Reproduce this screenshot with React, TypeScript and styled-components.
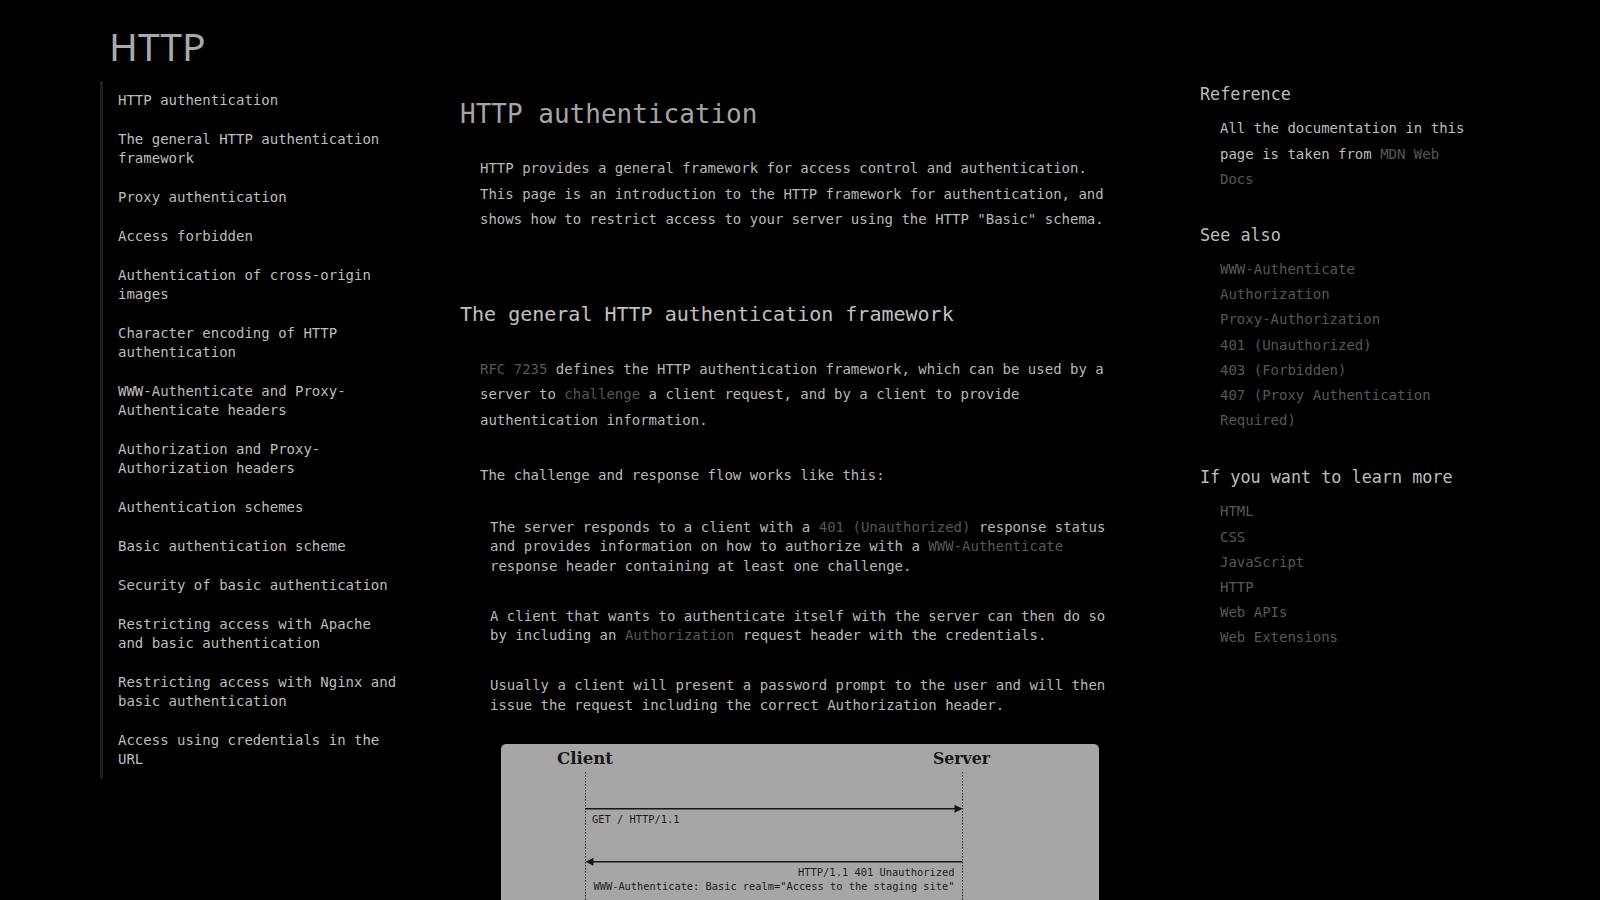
import React from "react";
import styled, { createGlobalStyle } from "styled-components";

const GlobalStyle = createGlobalStyle`
  html, body {
    background: #000;
  }
  body {
    margin: 0;
    font-family: "DejaVu Sans Mono", monospace;
    font-size: 14px;
    color: #b8b8b8;
  }
  ::-webkit-scrollbar {
    width: 5px;
    background: #000;
  }
  ::-webkit-scrollbar-thumb {
    background: #2f2f2f;
    border-radius: 2px;
  }
`;

const Page = styled.div`
  padding: 0 0 120px 100px;
`;

const Header = styled.header`
  height: 81px;
  padding-top: 26px;
  box-sizing: border-box;
`;

const SiteTitle = styled.h1`
  margin: 0 0 0 9px;
  font-family: "Noto Sans", sans-serif;
  font-size: 39px;
  line-height: 40px;
  font-weight: 400;
  color: #a9a9a9;
`;

const Layout = styled.div`
  display: flex;
  align-items: flex-start;
`;

const Sidebar = styled.nav`
  flex: none;
  width: 300px;
  box-sizing: border-box;
  border-left: 3px solid #1e1e1e;
`;

const NavList = styled.ul`
  list-style: none;
  margin: 0;
  padding: 0;
`;

const NavLink = styled.a`
  display: block;
  padding: 10px 0 10px 15px;
  line-height: 19px;
  color: #bdbdbd;
  text-decoration: none;
`;

const Main = styled.main`
  flex: none;
  width: 650px;
  margin-left: 60px;
`;

const PageTitle = styled.h1`
  margin: 18px 0 0;
  font-size: 26px;
  line-height: 31px;
  font-weight: 400;
  color: #a6a6a6;
`;

const SectionTitle = styled.h2`
  margin: 69px 0 0;
  font-size: 20px;
  line-height: 24px;
  font-weight: 400;
  color: #c0c0c0;
`;

const Para = styled.p<{ $gap?: number }>`
  margin: ${(p) => p.$gap ?? 30}px 0 0;
  padding-left: 20px;
  line-height: 25.5px;
`;

const Link = styled.a`
  color: #575757;
  text-decoration: none;
`;

const FlowList = styled.ul`
  list-style: none;
  margin: 29px 0 0;
  padding: 0;
`;

const FlowItem = styled.li`
  padding-left: 30px;
  line-height: 19.5px;
  & + & {
    margin-top: 30.5px;
  }
`;

const Figure = styled.figure`
  margin: 29px 0 0 41px;
  width: 598px;
  border-radius: 5px;
  overflow: hidden;
  background: #a6a6a6;
  line-height: 0;
`;

const Aside = styled.aside`
  flex: none;
  width: 270px;
  margin-left: 90px;
`;

const AsideTitle = styled.h3<{ $gap: number }>`
  margin: ${(p) => p.$gap}px 0 0;
  font-size: 16.8px;
  line-height: 20px;
  font-weight: 400;
  color: #bdbdbd;
`;

const AsideText = styled.p`
  margin: 12px 0 0;
  padding-left: 20px;
  line-height: 25.5px;
  color: #bdbdbd;
`;

const AsideList = styled.ul`
  list-style: none;
  margin: 12.5px 0 0;
  padding: 0 0 0 20px;
  width: 250px;
  line-height: 25.2px;
`;

const AsideLink = styled.a`
  color: #575757;
  text-decoration: none;
`;

const navItems = [
  "HTTP authentication",
  "The general HTTP authentication framework",
  "Proxy authentication",
  "Access forbidden",
  "Authentication of cross-origin images",
  "Character encoding of HTTP authentication",
  "WWW-Authenticate and Proxy-Authenticate headers",
  "Authorization and Proxy-Authorization headers",
  "Authentication schemes",
  "Basic authentication scheme",
  "Security of basic authentication",
  "Restricting access with Apache and basic authentication",
  "Restricting access with Nginx and basic authentication",
  "Access using credentials in the URL",
];

const seeAlso = [
  "WWW-Authenticate",
  "Authorization",
  "Proxy-Authorization",
  "401 (Unauthorized)",
  "403 (Forbidden)",
  "407 (Proxy Authentication Required)",
];

const learnMore = ["HTML", "CSS", "JavaScript", "HTTP", "Web APIs", "Web Extensions"];

const ink = "#161616";

function SequenceDiagram() {
  const cx = 84.5;
  const sx = 461.5;
  const mono = { fontFamily: "'DejaVu Sans Mono', monospace", fontSize: 10.4, fill: "#1c1c1c" };
  const serif = { fontFamily: "'DejaVu Serif', serif", fontWeight: 700, fontSize: 17, fill: ink };
  return (
    <svg width="598" height="340" viewBox="0 0 598 340">
      <text x="56" y="20" textLength="56" lengthAdjust="spacingAndGlyphs" style={serif}>
        Client
      </text>
      <text x="432" y="20" textLength="57" lengthAdjust="spacingAndGlyphs" style={serif}>
        Server
      </text>
      <line x1={cx} y1="28" x2={cx} y2="330" stroke="#222" strokeWidth="1" strokeDasharray="1.5 1.5" />
      <line x1={sx} y1="28" x2={sx} y2="330" stroke="#222" strokeWidth="1" strokeDasharray="1.5 1.5" />

      <line x1={cx} y1="64.7" x2={sx - 7} y2="64.7" stroke={ink} strokeWidth="1.6" />
      <polygon points={`${sx},64.7 ${sx - 8},60.7 ${sx - 8},68.7`} fill={ink} />
      <text x="91" y="78.5" style={mono}>GET / HTTP/1.1</text>

      <line x1={cx + 7} y1="117.7" x2={sx} y2="117.7" stroke={ink} strokeWidth="1.6" />
      <polygon points={`${cx},117.7 ${cx + 8},113.7 ${cx + 8},121.7`} fill={ink} />
      <text x="453.5" y="132" textAnchor="end" style={mono}>HTTP/1.1 401 Unauthorized</text>
      <text x="92.5" y="145.5" textLength="361" lengthAdjust="spacingAndGlyphs" style={mono}>
        WWW-Authenticate: Basic realm="Access to the staging site"
      </text>

      <line x1={cx} y1="205" x2={sx - 7} y2="205" stroke={ink} strokeWidth="1.6" />
      <polygon points={`${sx},205 ${sx - 8},201 ${sx - 8},209`} fill={ink} />
      <text x="91" y="219" style={mono}>GET / HTTP/1.1</text>
      <text x="91" y="232.5" style={mono}>Authorization: Basic YWxhZGRpbjpvcGVuc2VzYW1l</text>

      <line x1={cx + 7} y1="285" x2={sx} y2="285" stroke={ink} strokeWidth="1.6" />
      <polygon points={`${cx},285 ${cx + 8},281 ${cx + 8},289`} fill={ink} />
      <text x="453.5" y="299" textAnchor="end" style={mono}>HTTP/1.1 200 OK</text>
    </svg>
  );
}

export default function App() {
  return (
    <>
      <GlobalStyle />
      <Page>
        <Header>
          <SiteTitle>HTTP</SiteTitle>
        </Header>
        <Layout>
          <Sidebar>
            <NavList>
              {navItems.map((item) => (
                <li key={item}>
                  <NavLink href="#">{item}</NavLink>
                </li>
              ))}
            </NavList>
          </Sidebar>

          <Main>
            <PageTitle>HTTP authentication</PageTitle>
            <Para $gap={26}>
              HTTP provides a general framework for access control and authentication. This page is an
              introduction to the HTTP framework for authentication, and shows how to restrict access to
              your server using the HTTP "Basic" schema.
            </Para>

            <SectionTitle>The general HTTP authentication framework</SectionTitle>
            <Para $gap={31}>
              <Link href="#">RFC 7235</Link> defines the HTTP authentication framework, which can be used by
              a server to <Link href="#">challenge</Link> a client request, and by a client to provide
              authentication information.
            </Para>
            <Para>The challenge and response flow works like this:</Para>
            <FlowList>
              <FlowItem>
                The server responds to a client with a <Link href="#">401 (Unauthorized)</Link> response
                status and provides information on how to authorize with a{" "}
                <Link href="#">WWW-Authenticate</Link> response header containing at least one challenge.
              </FlowItem>
              <FlowItem>
                A client that wants to authenticate itself with the server can then do so by including an{" "}
                <Link href="#">Authorization</Link> request header with the credentials.
              </FlowItem>
              <FlowItem>
                Usually a client will present a password prompt to the user and will then issue the request
                including the correct Authorization header.
              </FlowItem>
            </FlowList>
            <Figure>
              <SequenceDiagram />
            </Figure>
            <Para>
              The general message flow above is the same for most (if not all) authentication schemes. The
              actual information in the headers and the way it is encoded does change!
            </Para>

            <SectionTitle>Proxy authentication</SectionTitle>
            <Para $gap={31}>
              The same challenge and response mechanism can be used for proxy authentication. As both
              resource authentication and proxy authentication can coexist, a different set of headers and
              status codes is needed. In the case of proxies, the challenging status code is{" "}
              <Link href="#">407 (Proxy Authentication Required)</Link>, the{" "}
              <Link href="#">Proxy-Authenticate</Link> response header contains at least one challenge
              applicable to the proxy, and the <Link href="#">Proxy-Authorization</Link> request header is
              used for providing the credentials to the proxy server.
            </Para>

            <SectionTitle>Access forbidden</SectionTitle>
            <Para $gap={31}>
              If a (proxy) server receives invalid credentials, it should respond with a{" "}
              <Link href="#">401 Unauthorized</Link> or with a{" "}
              <Link href="#">407 Proxy Authentication Required</Link>, and the user may send a new request or
              replace the Authorization header field.
            </Para>
            <Para>
              If a (proxy) server receives valid credentials that are inadequate to access a given resource,
              the server should respond with the <Link href="#">403 Forbidden</Link> status code. Unlike 401
              Unauthorized or 407 Proxy Authentication Required, authentication is impossible for this user
              and browsers will not propose a new attempt.
            </Para>

            <SectionTitle>Authentication of cross-origin images</SectionTitle>
            <Para $gap={31}>
              A potential security hole that has recently been fixed by browsers is authentication of
              cross-site images. From Firefox 59 onwards, image resources loaded from different origins to
              the current document are no longer able to trigger HTTP authentication dialogs, preventing
              user credentials being stolen if attackers were able to embed an arbitrary image into a
              third-party page.
            </Para>

            <SectionTitle>Character encoding of HTTP authentication</SectionTitle>
            <Para $gap={31}>
              Browsers use utf-8 encoding for usernames and passwords. Firefox once used ISO-8859-1, but
              changed to utf-8 for parity with other browsers and to avoid potential problems.
            </Para>
          </Main>

          <Aside>
            <AsideTitle $gap={3}>Reference</AsideTitle>
            <AsideText>
              All the documentation in this page is taken from <AsideLink href="#">MDN Web Docs</AsideLink>
            </AsideText>

            <AsideTitle $gap={32}>See also</AsideTitle>
            <AsideList>
              {seeAlso.map((item) => (
                <li key={item}>
                  <AsideLink href="#">{item}</AsideLink>
                </li>
              ))}
            </AsideList>

            <AsideTitle $gap={33.5}>If you want to learn more</AsideTitle>
            <AsideList>
              {learnMore.map((item) => (
                <li key={item}>
                  <AsideLink href="#">{item}</AsideLink>
                </li>
              ))}
            </AsideList>
          </Aside>
        </Layout>
      </Page>
    </>
  );
}
